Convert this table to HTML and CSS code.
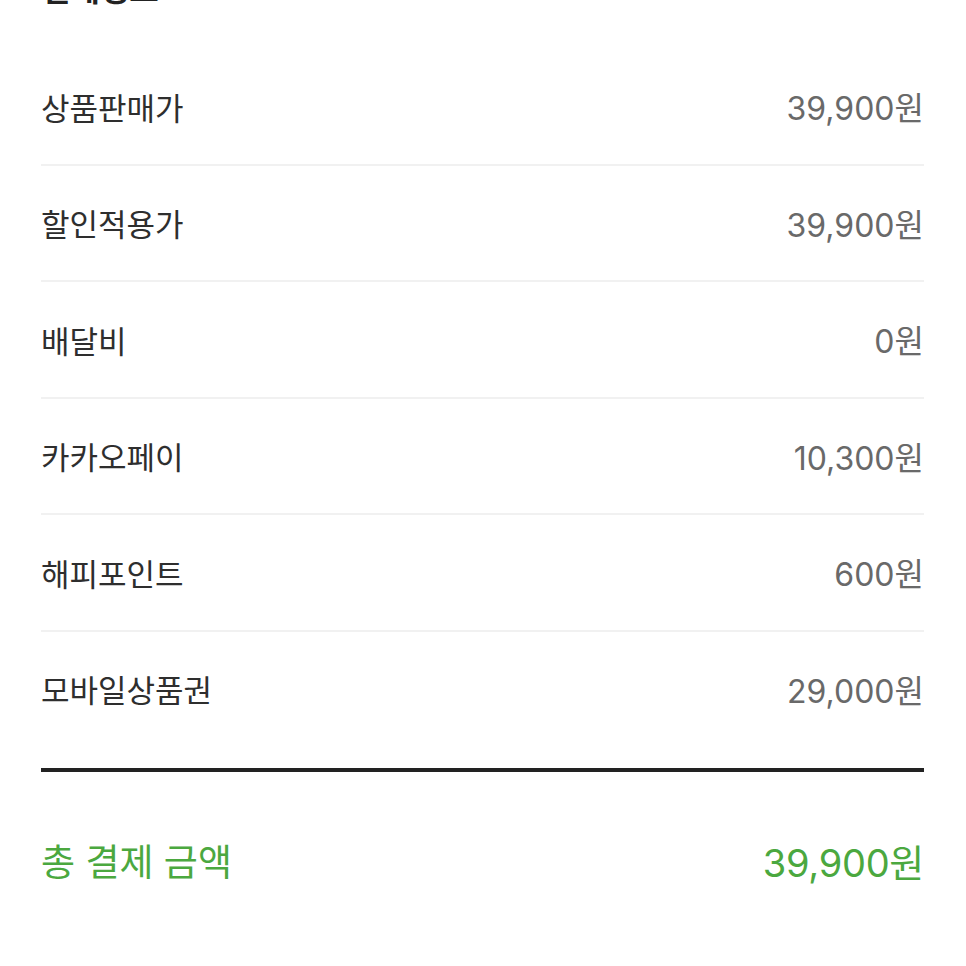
FILE: index.html
```html
<!DOCTYPE html>
<html lang="ko">
<head>
<meta charset="utf-8">
<link rel="stylesheet" href="styles.css">
</head>
<body>
<div class="page">
  <h2 class="title">결제정보</h2>
  <div class="list">
    <div class="row"><span class="label">상품판매가</span><span class="value">39,900원</span></div>
    <div class="row"><span class="label">할인적용가</span><span class="value">39,900원</span></div>
    <div class="row"><span class="label">배달비</span><span class="value">0원</span></div>
    <div class="row"><span class="label">카카오페이</span><span class="value">10,300원</span></div>
    <div class="row"><span class="label">해피포인트</span><span class="value">600원</span></div>
    <div class="row"><span class="label">모바일상품권</span><span class="value">29,000원</span></div>
  </div>
  <div class="bar"></div>
  <div class="total"><span class="total-label">총 결제 금액</span><span class="total-value">39,900원</span></div>
</div>
</body>
</html>
```
FILE: styles.css
```css
html, body {
  margin: 0;
  padding: 0;
  background: #fff;
}
body {
  font-family: Inter, "Noto Sans CJK KR", sans-serif;
  overflow: hidden;
}
.page {
  padding: 0 42px 0 41px;
}
.title {
  margin: -30px 0 39px;
  font-size: 32px;
  line-height: 40px;
  font-weight: 700;
  color: #222;
}
.row {
  display: flex;
  justify-content: space-between;
  align-items: center;
  height: 114.5px;
  border-bottom: 2px solid #f1f1f1;
}
.row:last-child {
  border-bottom: none;
}
.label {
  font-family: "Noto Sans CJK KR", sans-serif;
  font-size: 31px;
  font-weight: 400;
  color: #2e2e2e;
}
.value {
  font-size: 32px;
  font-weight: 400;
  color: #696969;
}
.bar {
  margin-top: 22px;
  height: 4px;
  background: #222;
}
.total {
  display: flex;
  justify-content: space-between;
  align-items: center;
  height: 176px;
  color: #4ba83f;
}
.total-label {
  font-family: "Noto Sans CJK KR", sans-serif;
  font-size: 37px;
  font-weight: 400;
}
.total-value {
  font-size: 38px;
  letter-spacing: -0.3px;
}
```
